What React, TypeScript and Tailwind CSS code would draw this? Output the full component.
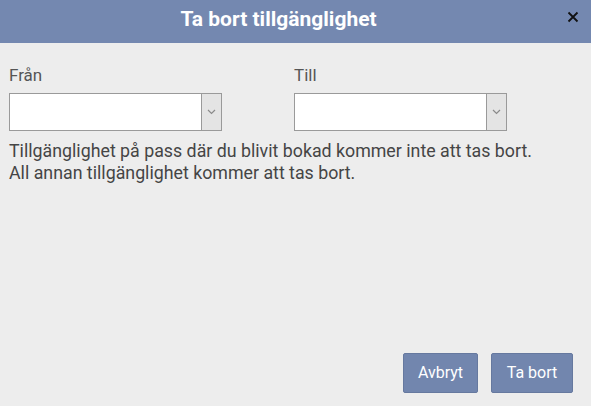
import React from 'react';

const SelectBox: React.FC = () => (
  <div className="flex h-[38px] w-[213px] border border-[#9a9a9a] bg-white">
    <div className="flex-1" />
    <div className="flex w-[20px] items-center justify-center border-l border-[#9a9a9a] bg-[#e4e4e4]">
      <svg width="9" height="6" viewBox="0 0 9 6" fill="none">
        <path d="M1 1l3.5 3.5L8 1" stroke="#8a8a8a" strokeWidth="1.2" />
      </svg>
    </div>
  </div>
);

export default function App() {
  return (
    <div className="flex h-[406px] w-[591px] flex-col bg-[#ededed] font-['Roboto',sans-serif] text-[#474747]">
      {/* Header */}
      <div className="relative flex h-[43px] shrink-0 items-center bg-[#7488b0] pb-[6px]">
        <div className="w-[557px] text-center text-[21px] font-bold leading-[26px] text-white">Ta bort tillgänglighet</div>
        <button className="absolute right-[12px] top-[11px]">
          <svg width="12" height="12" viewBox="0 0 12 12">
            <path d="M1.5 1.5l9 9M10.5 1.5l-9 9" stroke="#111" strokeWidth="1.8" />
          </svg>
        </button>
      </div>

      {/* Body */}
      <div className="flex flex-1 flex-col px-[9px] pt-[20px]">
        <div className="grid grid-cols-[285px_1fr]">
          <div>
            <div className="mb-[6px] text-[17px] leading-[24px] text-[#555]">Från</div>
            <SelectBox />
          </div>
          <div>
            <div className="mb-[6px] text-[17px] leading-[24px] text-[#555]">Till</div>
            <SelectBox />
          </div>
        </div>
        <div className="mt-[9px] text-[17.8px] leading-[22px] text-[#454545]">
          <p>Tillgänglighet på pass där du blivit bokad kommer inte att tas bort.</p>
          <p>All annan tillgänglighet kommer att tas bort.</p>
        </div>
      </div>

      {/* Footer */}
      <div className="flex justify-end gap-[13px] pb-[13px] pr-[18px]">
        <button className="h-[40px] w-[75px] rounded-[2px] border border-[#66799f] bg-[#7286ae] text-[16px] text-white">
          Avbryt
        </button>
        <button className="h-[40px] w-[82px] rounded-[2px] border border-[#66799f] bg-[#7286ae] text-[16px] text-white">
          Ta bort
        </button>
      </div>
    </div>
  );
}
